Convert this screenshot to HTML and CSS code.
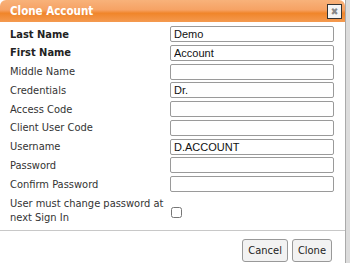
FILE: index.html
```html
<!DOCTYPE html>
<html lang="en">
<head>
	<meta charset="UTF-8">
	<title>Clone Account</title>
	<link rel="stylesheet" href="styles.css">
</head>
<body>

	<div class="dialog">
		<div class="titlebar">
			<span class="title">Clone Account</span>
			<i class="close">&#10006;</i>
		</div>

		<form class="fields" action="" method="get">
			<label class="req" for="last-name">Last Name</label>
			<input type="text" id="last-name" value="Demo">

			<label class="req" for="first-name">First Name</label>
			<input type="text" id="first-name" value="Account">

			<label for="middle-name">Middle Name</label>
			<input type="text" id="middle-name">

			<label for="credentials">Credentials</label>
			<input type="text" id="credentials" value="Dr.">

			<label for="access-code">Access Code</label>
			<input type="text" id="access-code">

			<label for="client-code">Client User Code</label>
			<input type="text" id="client-code">

			<label for="username">Username</label>
			<input type="text" id="username" value="D.ACCOUNT">

			<label for="password">Password</label>
			<input type="password" id="password">

			<label for="confirm">Confirm Password</label>
			<input type="password" id="confirm">

			<label class="wrap" for="must-change">User must change password at next Sign In</label>
			<span class="check"><input type="checkbox" id="must-change"></span>
		</form>

		<div class="buttons">
			<button type="button">Cancel</button>
			<button type="button">Clone</button>
		</div>
	</div>

</body>
</html>
```

FILE: styles.css
```css
* {
	box-sizing: border-box;
}
body {
	margin: 0;
	background-color: #dcdcdc;
	font-family: "DejaVu Sans Condensed", "DejaVu Sans", Verdana, sans-serif;
	font-size: 11px;
	color: #333;
}
.dialog {
	width: 346px;
	height: 263px;
	background-color: #fff;
	border-right: 1px solid #aaa;
}
.titlebar {
	display: flex;
	align-items: center;
	justify-content: space-between;
	height: 22px;
	padding: 0 3px 0 10px;
	border-radius: 6px 6px 0 0;
	background: linear-gradient(#f8b27a 0%, #f6a264 45%, #f0852a 60%, #f49a50 100%);
}
.title {
	color: #fff;
	font-weight: bold;
	font-size: 11.5px;
}
.close {
	display: block;
	width: 15px;
	height: 15px;
	border: 1px solid #333;
	background-color: #f4f4f4;
	color: #888;
	font-style: normal;
	font-size: 10px;
	line-height: 13px;
	text-align: center;
}
.fields {
	display: grid;
	grid-template-columns: 160px 164px;
	row-gap: 2.75px;
	align-items: center;
	margin: 0;
	padding: 4px 0 5px 10px;
	border-bottom: 1px solid #c8c8c8;
}
label {
	line-height: 13px;
}
.req {
	font-weight: bold;
	color: #222;
}
.wrap {
	padding-top: 2px;
	line-height: 14px;
}
input[type="text"],
input[type="password"] {
	height: 16px;
	margin: 0;
	padding: 0 3px;
	border: 1px solid #9a9a9a;
	border-radius: 2px;
	font-family: "Liberation Sans", Arial, sans-serif;
	font-size: 11px;
	color: #111;
}
.check {
	padding-top: 5px;
}
input[type="checkbox"] {
	width: 11px;
	height: 11px;
	margin: 0 0 0 1px;
	display: block;
}
.buttons {
	display: flex;
	justify-content: flex-end;
	gap: 4px;
	padding: 8px 13px 0 0;
}
button {
	height: 23px;
	padding: 0 5px;
	border: 1px solid #999;
	border-radius: 3px;
	background-color: #f2f2f2;
	font-family: "DejaVu Sans Condensed", "DejaVu Sans", Verdana, sans-serif;
	font-size: 11px;
	color: #222;
}
```
